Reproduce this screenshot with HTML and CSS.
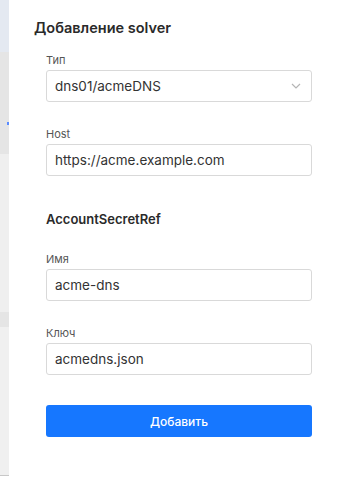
FILE: index.html
```html
<!DOCTYPE html>
<html lang="ru">
<head>
    <meta charset="UTF-8">
    <meta name="viewport" content="width=device-width, initial-scale=1.0">
    <title>Добавление solver</title>
    <link rel="stylesheet" href="styles.css">
</head>
<body>
    <div class="page">
        <!-- кусок страницы под шторкой -->
        <div class="backdrop">
            <div class="bd-head"></div>
            <div class="bd-row1"><span class="bd-mark"></span></div>
            <div class="bd-row2"></div>
            <div class="bd-row3"></div>
            <div class="bd-row4"></div>
        </div>

        <div class="drawer">
            <h2 class="title">Добавление solver</h2>

            <div class="fields">
                <div class="field">
                    <label class="label">Тип</label>
                    <div class="select">
                        <span>dns01/acmeDNS</span>
                        <svg class="chevron" width="10" height="6" viewBox="0 0 10 6">
                            <path d="M1 1l4 4 4-4" fill="none" stroke="#b5b5b5" stroke-width="1.2"/>
                        </svg>
                    </div>
                </div>

                <div class="field">
                    <label class="label">Host</label>
                    <input class="input" type="text" value="https://acme.example.com">
                </div>

                <h3 class="subtitle">AccountSecretRef</h3>

                <div class="field">
                    <label class="label">Имя</label>
                    <input class="input" type="text" value="acme-dns">
                </div>

                <div class="field">
                    <label class="label">Ключ</label>
                    <input class="input" type="text" value="acmedns.json">
                </div>

                <button class="btn" type="button">Добавить</button>
            </div>
        </div>
    </div>
</body>
</html>
```

FILE: styles.css
```css
* {
    box-sizing: border-box;
}

body {
    margin: 0;
    font-family: "Inter", "Noto Sans", sans-serif;
    color: #262626;
    background: #fff;
}

.page {
    display: flex;
    height: 482px;
    overflow: hidden;
}

/* полоска фона слева */
.backdrop {
    width: 9px;
    flex: none;
    display: flex;
    flex-direction: column;
}

.bd-head {
    height: 52px;
    background: #e4e9f1;
}

.bd-row1 {
    height: 102px;
    background: #e5e5e5;
    position: relative;
}

.bd-mark {
    position: absolute;
    right: 0;
    top: 70px;
    width: 2px;
    height: 3px;
    background: #5b8cff;
}

.bd-row2 {
    height: 158px;
    background: #efefef;
}

.bd-row3 {
    height: 15px;
    background: #e5e5e5;
}

.bd-row4 {
    flex: 1;
    background: #f0f0f0;
    border-bottom: 1px solid #c8c8c8;
    margin-bottom: 6px;
}

.drawer {
    flex: 1;
    padding: 18px 34px 0 25px;
}

.title {
    margin: 0 0 16px;
    font-size: 14.5px;
    line-height: 20px;
    font-weight: 600;
    color: #2a2a2a;
}

.fields {
    padding-left: 12px;
    display: flex;
    flex-direction: column;
}

.field {
    display: flex;
    flex-direction: column;
    margin-bottom: 26px;
}

.label {
    font-size: 11px;
    color: #555;
    margin-bottom: 3px;
    line-height: 13px;
}

.select,
.input {
    height: 32px;
    border: 1px solid #d9d9d9;
    border-radius: 3px;
    padding: 0 8px;
    font-family: inherit;
    font-size: 13.5px;
    color: #333;
    background: #fff;
}

.select {
    display: flex;
    align-items: center;
    justify-content: space-between;
}

.chevron {
    margin-right: 2px;
}

.subtitle {
    margin: 8px 0 25px;
    font-size: 13px;
    line-height: 18px;
    font-weight: 600;
    color: #2a2a2a;
}

.btn {
    margin-top: 4px;
    height: 32px;
    border: none;
    border-radius: 3px;
    background: #1677ff;
    color: #fff;
    font-family: inherit;
    font-size: 12px;
    font-weight: 500;
}
```
